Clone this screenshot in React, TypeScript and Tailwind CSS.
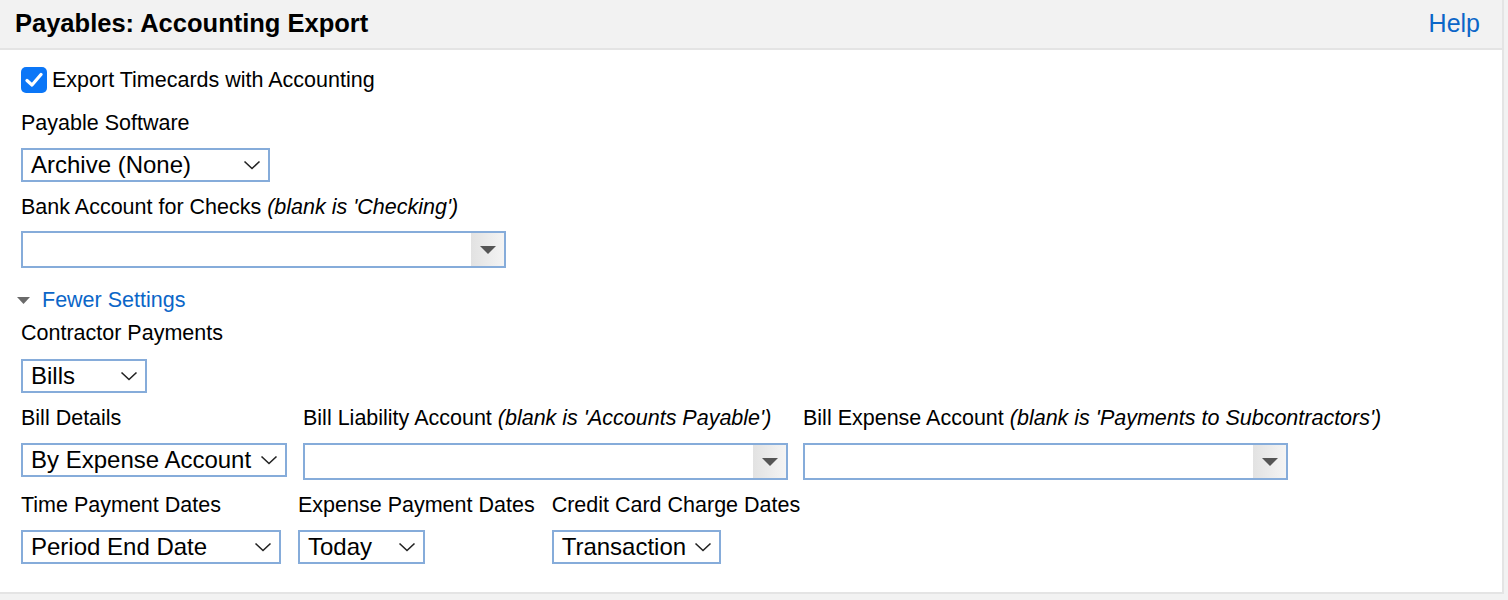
import React from "react";

const font = { fontFamily: '"Liberation Sans", Arial, sans-serif' };

const Chevron = () => (
    <svg width="18" height="10" viewBox="0 0 18 10" className="shrink-0">
        <path d="M1.5 1.5 L9 8.5 L16.5 1.5" fill="none" stroke="#222" strokeWidth="1.6" />
    </svg>
);

const Select = ({ value, width }: { value: string; width: string }) => (
    <div className={`flex items-center justify-between h-[34px] border-2 border-[#86acda] bg-white pl-[8px] pr-[7px] text-[24px] text-black ${width}`}>
        <span className="leading-none whitespace-nowrap">{value}</span>
        <Chevron />
    </div>
);

const Combo = ({ width }: { width: string }) => (
    <div className={`flex h-[37px] border-2 border-[#86acda] bg-white ${width}`}>
        <div className="flex-1" />
        <div className="w-[33px] h-full flex items-center justify-center bg-gradient-to-r from-[#e2e2e2] to-[#f4f4f4]">
            <svg width="16" height="8" viewBox="0 0 16 8">
                <path d="M0 0 L16 0 L8 8 Z" fill="#555" />
            </svg>
        </div>
    </div>
);

const Label = ({ text, note }: { text: string; note?: string }) => (
    <div className="h-6 leading-[26px] text-[21.5px] text-black whitespace-nowrap">
        {text}
        {note && <i> {note}</i>}
    </div>
);

const App = () => {
    return (
        <div className="w-[1508px] h-[600px] bg-[#f2f2f2] overflow-hidden" style={font}>
            <div className="w-[1504px] h-[594px] bg-white border-r-2 border-b-2 border-[#e4e4e4]">
                {/* header */}
                <div className="flex items-center justify-between h-[50px] bg-[#f2f2f2] border-b-2 border-[#e4e4e4] pl-[15px] pr-[22px]">
                    <span className="text-[25.5px] font-bold text-black -mt-[1px]">Payables: Accounting Export</span>
                    <span className="text-[25px] text-[#0b66c8] -mt-[1px]">Help</span>
                </div>

                <div className="flex flex-col pl-[21px]">
                    <div className="flex items-center h-[28px] mt-[16px]">
                        <div className="w-[26px] h-[26px] rounded-[5px] bg-[#0b76f7] flex items-center justify-center">
                            <svg width="18" height="16" viewBox="0 0 18 16">
                                <path d="M2 8.5 L7 13 L16 2.5" fill="none" stroke="white" strokeWidth="3.2" strokeLinecap="round" strokeLinejoin="round" />
                            </svg>
                        </div>
                        <span className="ml-[5px] text-[21.5px] text-black">Export Timecards with Accounting</span>
                    </div>

                    <div className="mt-[16px]"><Label text="Payable Software" /></div>
                    <div className="mt-[14px]"><Select value="Archive (None)" width="w-[249px]" /></div>

                    <div className="mt-[12px]"><Label text="Bank Account for Checks" note="(blank is 'Checking')" /></div>
                    <div className="mt-[13px]"><Combo width="w-[485px]" /></div>

                    <div className="flex items-center h-6 mt-[20px] -ml-[4px]">
                        <svg width="13" height="7" viewBox="0 0 13 7">
                            <path d="M0 0 L13 0 L6.5 7 Z" fill="#6a6a6a" />
                        </svg>
                        <span className="ml-[12px] text-[21.5px] text-[#0b66c8]">Fewer Settings</span>
                    </div>

                    <div className="mt-[8px]"><Label text="Contractor Payments" /></div>
                    <div className="mt-[15px]"><Select value="Bills" width="w-[126px]" /></div>

                    <div className="flex gap-[16px] mt-[12px]">
                        <div className="flex flex-col w-[266px]">
                            <Label text="Bill Details" />
                            <div className="mt-[14px]"><Select value="By Expense Account" width="w-[266px]" /></div>
                        </div>
                        <div className="flex flex-col w-[484px]">
                            <Label text="Bill Liability Account" note="(blank is 'Accounts Payable')" />
                            <div className="mt-[14px]"><Combo width="w-[485px]" /></div>
                        </div>
                        <div className="flex flex-col w-[484px]">
                            <Label text="Bill Expense Account" note="(blank is 'Payments to Subcontractors')" />
                            <div className="mt-[14px]"><Combo width="w-[485px]" /></div>
                        </div>
                    </div>

                    <div className="flex gap-[17px] mt-[12px]">
                        <div className="flex flex-col w-[260px]">
                            <Label text="Time Payment Dates" />
                            <div className="mt-[14px]"><Select value="Period End Date" width="w-[260px]" /></div>
                        </div>
                        <div className="flex flex-col">
                            <Label text="Expense Payment Dates" />
                            <div className="mt-[14px]"><Select value="Today" width="w-[127px]" /></div>
                        </div>
                        <div className="flex flex-col">
                            <Label text="Credit Card Charge Dates" />
                            <div className="mt-[14px]"><Select value="Transaction" width="w-[169px]" /></div>
                        </div>
                    </div>
                </div>
            </div>
        </div>
    );
};

export default App;
